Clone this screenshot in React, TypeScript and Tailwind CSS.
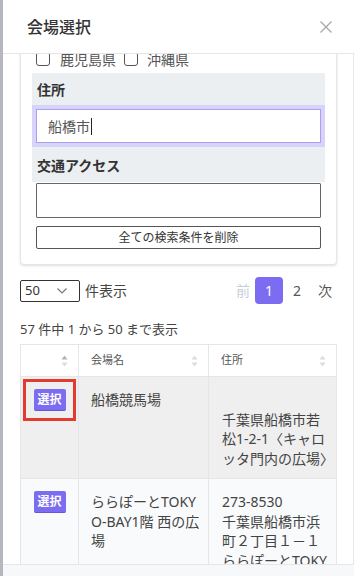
import React from "react";

const font = { fontFamily: '"Noto Sans", "Noto Sans CJK JP", sans-serif' };

function SortIcon({ upDark = false }: { upDark?: boolean }) {
  return (
    <svg width="7" height="12" viewBox="0 0 7 12" className="shrink-0">
      <path d="M3.5 0.5 L6.5 4.5 L0.5 4.5 Z" fill={upDark ? "#b4b4b4" : "#dcdcdc"} />
      <path d="M3.5 11.5 L6.5 7.5 L0.5 7.5 Z" fill="#dcdcdc" />
    </svg>
  );
}

function SelectBtn() {
  return (
    <div className="w-[32px] h-[22px] rounded-[2px] bg-[#7c6cf2] border-b border-[#6655d8] text-white text-[12px] font-bold flex items-center justify-center leading-none">
      選択
    </div>
  );
}

export default function App() {
  return (
    <div className="w-[354px] h-[576px] bg-[#b4b8be] overflow-hidden flex" style={font}>
      <div className="ml-[3px] flex-1 bg-white flex flex-col min-w-0">
        {/* header */}
        <div className="h-[54px] shrink-0 border-b border-[#e4e6ea] flex items-center justify-between pl-[24px] pr-[22px]">
          <div className="text-[16px] font-medium text-[#333]">会場選択</div>
          <svg width="12" height="12" viewBox="0 0 12 12">
            <path d="M0.5 0.5 L11.5 11.5 M11.5 0.5 L0.5 11.5" stroke="#a8a8a8" strokeWidth="1.3" />
          </svg>
        </div>

        {/* body */}
        <div className="flex-1 overflow-hidden border-r border-[#e6e6e6] pl-[17px] pr-[16px]">
          {/* card */}
          <div className="-mt-[10px] border border-[#e6e6e6] rounded-[4px] shadow-sm px-[11px] pt-[4px] pb-[15px] bg-white">
            <div className="h-[20px] flex items-center pl-[4px] text-[14px] text-[#555]">
              <div className="w-[14px] h-[14px] border border-[#555] rounded-[3px] bg-white" />
              <span className="ml-[10px]">鹿児島県</span>
              <div className="ml-[8px] w-[14px] h-[14px] border border-[#555] rounded-[3px] bg-white" />
              <span className="ml-[9px]">沖縄県</span>
            </div>

            <div className="mt-[4px] bg-[#eceff1] px-[4px] pt-[7px] pb-[6px]">
              <div className="h-[20px] leading-[20px] text-[14px] font-bold text-[#333] pl-[1px] mb-[9px]">住所</div>
              <div className="h-[34px] bg-white border border-[#ab9ff4] ring-4 ring-[#d8d3fa] flex items-center pl-[11px] text-[14px] text-[#555]">
                <span>船橋市</span>
                <span className="inline-block w-[1px] h-[17px] bg-[#222] ml-[1px]" />
              </div>
              <div className="mt-[13px] h-[20px] leading-[20px] text-[14px] font-bold text-[#333] pl-[1px]">交通アクセス</div>
            </div>

            <div className="mt-[1px] mx-[4px] h-[35px] border border-[#666] rounded-[1px] bg-white" />
            <div className="mt-[8px] mx-[4px] h-[23px] border border-[#555] rounded-[2px] bg-white flex items-center justify-center text-[12px] text-[#333]">
              全ての検索条件を削除
            </div>
          </div>

          {/* controls */}
          <div className="mt-[12px] h-[27px] flex items-center justify-between">
            <div className="flex items-center">
              <div className="w-[60px] h-[22px] border border-[#333] rounded-[2px] flex items-center pl-[4px] text-[13px] text-[#333]">
                <span>50</span>
                <svg width="10" height="6" viewBox="0 0 10 6" className="ml-[17px]">
                  <path d="M0.5 0.5 L5 5 L9.5 0.5" fill="none" stroke="#777" strokeWidth="1.2" />
                </svg>
              </div>
              <span className="ml-[5px] text-[14px] text-[#444]">件表示</span>
            </div>
            <div className="flex items-center pr-[5px] text-[14px]">
              <span className="text-[#c6ceda]">前</span>
              <div className="ml-[5px] w-[28px] h-[27px] rounded-[4px] bg-[#7c6cf2] text-white flex items-center justify-center">1</div>
              <span className="ml-[10px] text-[#555]">2</span>
              <span className="ml-[17px] text-[#555]">次</span>
            </div>
          </div>

          <div className="mt-[15px] h-[20px] leading-[20px] text-[13px] text-[#444]">57 件中 1 から 50 まで表示</div>

          {/* table */}
          <div className="mt-[5px] border border-[#e6e6e6]">
            <div className="grid grid-cols-[57px_130px_128px] h-[32px] border-b border-[#e6e6e6] bg-white text-[11px] text-[#555]">
              <div className="flex items-center justify-end pr-[10px]">
                <SortIcon upDark />
              </div>
              <div className="border-l border-[#e6e6e6] flex items-center justify-between pl-[12px] pr-[10px]">
                <span>会場名</span>
                <SortIcon />
              </div>
              <div className="border-l border-[#e6e6e6] flex items-center justify-between pl-[12px] pr-[10px]">
                <span>住所</span>
                <SortIcon />
              </div>
            </div>

            <div className="grid grid-cols-[57px_130px_128px] bg-[#efefef] text-[14px] leading-[19.5px] text-[#444]">
              <div className="relative flex justify-center pt-[12px]">
                <SelectBtn />
                <div className="absolute left-[2px] top-[2px] w-[53px] h-[42px] border-[3px] border-[#e53a2f]" />
              </div>
              <div className="border-l border-[#e6e6e6] pl-[12px] pt-[13px]">船橋競馬場</div>
              <div className="border-l border-[#e6e6e6] pl-[13px] pt-[13px] pb-[10px]">
                <div>&nbsp;</div>
                <div>千葉県船橋市若</div>
                <div>松1-2-1〈キャロ</div>
                <div>ッタ門内の広場〉</div>
              </div>
            </div>

            <div className="grid grid-cols-[57px_130px_128px] border-t border-[#e6e6e6] bg-[#f9fafc] text-[14px] leading-[19.5px] text-[#444]">
              <div className="flex justify-center pt-[12px]">
                <SelectBtn />
              </div>
              <div className="border-l border-[#e6e6e6] pl-[12px] pt-[13px]">
                <div>ららぽーとTOKY</div>
                <div>O-BAY1階 西の広</div>
                <div>場</div>
              </div>
              <div className="border-l border-[#e6e6e6] pl-[13px] pt-[13px] pb-[10px]">
                <div>273-8530</div>
                <div>千葉県船橋市浜</div>
                <div>町２丁目１－１</div>
                <div>ららぽーとTOKY</div>
                <div>O-BAY</div>
              </div>
            </div>
          </div>
        </div>

        {/* footer */}
        <div className="h-[12px] shrink-0 border-t border-[#e4e6ea] bg-[#f7f8fa]" />
      </div>
    </div>
  );
}
